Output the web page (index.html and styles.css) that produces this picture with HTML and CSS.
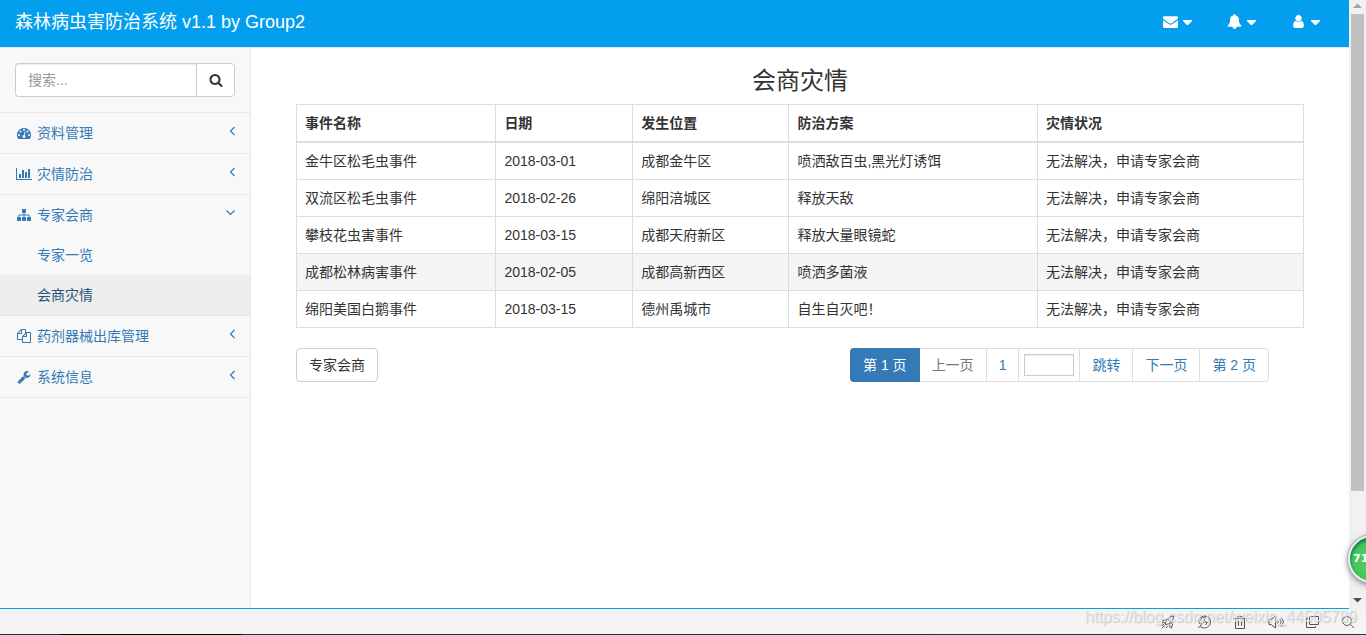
FILE: index.html
```html
<!DOCTYPE html>
<html lang="zh-CN">
<head>
<meta charset="utf-8">
<title>森林病虫害防治系统</title>
<link rel="stylesheet" href="styles.css">
</head>
<body>
<div class="viewport">
  <div class="page">
    <header class="navbar">
      <a class="brand" href="#">森林病虫害防治系统 v1.1 by Group2</a>
      <nav class="top-links">
        <button type="button" class="top-link" aria-label="消息">
          <svg class="icon" viewBox="0 0 1792 1792"><path d="M1792 710v794q0 66-47 113t-113 47h-1472q-66 0-113-47t-47-113v-794q44 49 101 87 362 246 497 345 57 42 92.500 65.500t94.500 48 110 24.500h2q51 0 110-24.500t94.500-48 92.500-65.500q170-123 498-345 57-39 100-87zm0-294q0 79-49 151t-122 123q-376 261-468 325-10 7-42.500 31t-54 38.500-52 32.500-57.500 27-50 9h-2q-23 0-50-9t-57.500-27-52-32.500-54-38.500-42.500-31q-91-64-262-182.500t-205-142.500q-62-42-117-115.500t-55-136.500q0-78 41.500-130t118.500-52h1472q65 0 112.500 47t47.500 113z"/></svg>
          <svg class="caret" viewBox="0 0 9 14"><path d="M0 5h9v1L5 10H4L0 6z"/></svg>
        </button>
        <button type="button" class="top-link" aria-label="通知">
          <svg class="icon" viewBox="0 0 1792 1792"><path d="M912 1696q0-16-16-16-59 0-101.500-42.500t-42.500-101.500q0-16-16-16t-16 16q0 73 51.500 124.500t124.500 51.500q16 0 16-16zm816-288q0 52-38 90t-90 38h-448q0 106-75 181t-181 75-181-75-75-181h-448q-52 0-90-38t-38-90q50-42 91-88t85-119.500 74.500-158.500 50-206 19.500-260q0-152 117-282.500t307-158.500q-8-19-8-39 0-40 28-68t68-28 68 28 28 68q0 20-8 39 190 28 307 158.500t117 282.500q0 139 19.500 260t50 206 74.500 158.500 85 119.500 91 88z"/></svg>
          <svg class="caret" viewBox="0 0 9 14"><path d="M0 5h9v1L5 10H4L0 6z"/></svg>
        </button>
        <button type="button" class="top-link" aria-label="用户">
          <svg class="icon" viewBox="0 0 1792 1792"><path d="M1536 1399q0 109-62.500 187t-150.500 78h-854q-88 0-150.500-78t-62.500-187q0-85 8.500-160.500t31.500-152 58.500-131 94-89 134.500-34.500q131 128 313 128t313-128q76 0 134.500 34.500t94 89 58.500 131 31.500 152 8.500 160.500zm-256-887q0 159-112.500 271.500t-271.500 112.500-271.500-112.500-112.500-271.500 112.500-271.500 271.500-112.500 271.500 112.500 112.500 271.500z"/></svg>
          <svg class="caret" viewBox="0 0 9 14"><path d="M0 5h9v1L5 10H4L0 6z"/></svg>
        </button>
      </nav>
    </header>

    <div class="columns">
      <aside class="sidebar">
        <form class="search">
          <input class="search-input" type="text" placeholder="搜索..." aria-label="搜索">
          <button class="search-button" type="button" aria-label="搜索">
            <svg class="icon" viewBox="0 0 1792 1792"><path d="M1216 832q0-185-131.500-316.500t-316.500-131.500-316.500 131.500-131.500 316.500 131.500 316.500 316.500 131.500 316.500-131.500 131.500-316.500zm512 832q0 52-38 90t-90 38q-54 0-90-38l-343-342q-179 124-399 124-143 0-273.500-55.500t-225-150-150-225-55.500-273.500 55.500-273.500 150-225 225-150 273.500-55.500 273.500 55.500 225 150 150 225 55.500 273.500q0 220-124 399l343 343q37 37 37 90z"/></svg>
          </button>
        </form>
        <ul class="menu">
          <li class="menu-item">
            <a class="menu-link" href="#">
              <svg class="icon" viewBox="0 0 1792 1792"><path d="M384 1152q0-53-37.500-90.500t-90.500-37.500-90.500 37.500-37.500 90.500 37.500 90.500 90.500 37.500 90.500-37.500 37.500-90.500zm192-448q0-53-37.500-90.500t-90.500-37.500-90.500 37.500-37.500 90.500 37.500 90.500 90.500 37.500 90.500-37.500 37.500-90.500zm428 481l101-382q6-26-7.500-48.500t-38.500-29.500-48 6.500-30 39.500l-101 382q-60 5-107 43.500t-63 98.500q-20 77 20 146t117 89 146-20 89-117q16-60-6-117t-72-91zm660-33q0-53-37.500-90.500t-90.500-37.500-90.500 37.500-37.500 90.500 37.500 90.500 90.500 37.500 90.500-37.500 37.500-90.500zm-640-640q0-53-37.500-90.500t-90.500-37.500-90.500 37.500-37.500 90.500 37.500 90.500 90.500 37.500 90.500-37.500 37.500-90.500zm448 192q0-53-37.500-90.500t-90.500-37.500-90.500 37.500-37.500 90.500 37.500 90.500 90.500 37.500 90.500-37.500 37.500-90.500zm320 448q0 261-141 483-19 29-54 29h-1402q-35 0-54-29-141-221-141-483 0-182 71-348t191-286 286-191 348-71 348 71 286 191 191 286 71 348z"/></svg>
              <span class="menu-text">资料管理</span>
              <svg class="arrow" viewBox="0 0 10 16"><path d="M8.500 4L4.500 8l4 4"/></svg>
            </a>
          </li>
          <li class="menu-item">
            <a class="menu-link" href="#">
              <svg class="icon icon-wide" viewBox="0 0 2048 1792"><path d="M640 896v512h-256v-512h256zm384-512v1024h-256v-1024h256zm1024 1152v128h-2048v-1536h128v1408h1920zm-640-896v768h-256v-768h256zm384-384v1152h-256v-1152h256z"/></svg>
              <span class="menu-text">灾情防治</span>
              <svg class="arrow" viewBox="0 0 10 16"><path d="M8.500 4L4.500 8l4 4"/></svg>
            </a>
          </li>
          <li class="menu-item">
            <a class="menu-link" href="#">
              <svg class="icon" viewBox="0 0 1792 1792"><path d="M1792 1248v320q0 40-28 68t-68 28h-320q-40 0-68-28t-28-68v-320q0-40 28-68t68-28h96v-192h-512v192h96q40 0 68 28t28 68v320q0 40-28 68t-68 28h-320q-40 0-68-28t-28-68v-320q0-40 28-68t68-28h96v-192h-512v192h96q40 0 68 28t28 68v320q0 40-28 68t-68 28h-320q-40 0-68-28t-28-68v-320q0-40 28-68t68-28h96v-192q0-52 38-90t90-38h512v-192h-96q-40 0-68-28t-28-68v-320q0-40 28-68t68-28h320q40 0 68 28t28 68v320q0 40-28 68t-68 28h-96v192h512q52 0 90 38t38 90v192h96q40 0 68 28t28 68z"/></svg>
              <span class="menu-text">专家会商</span>
              <svg class="arrow" viewBox="0 0 10 16"><path d="M.5 5.500l4 4 4-4"/></svg>
            </a>
            <ul class="submenu">
              <li><a class="sub-link" href="#">专家一览</a></li>
              <li><a class="sub-link active" href="#">会商灾情</a></li>
            </ul>
          </li>
          <li class="menu-item">
            <a class="menu-link" href="#">
              <svg class="icon" viewBox="0 0 1792 1792"><path d="M1696 384q40 0 68 28t28 68v1216q0 40-28 68t-68 28h-960q-40 0-68-28t-28-68v-288h-544q-40 0-68-28t-28-68v-672q0-40 20-88t48-76l408-408q28-28 76-48t88-20h416q40 0 68 28t28 68v328q68-40 128-40h416zm-544 213l-299 299h299v-299zm-640-384l-299 299h299v-299zm196 647l316-316v-416h-384v416q0 40-28 68t-68 28h-416v640h512v-256q0-40 20-88t48-76zm956 804v-1152h-384v416q0 40-28 68t-68 28h-416v640h896z"/></svg>
              <span class="menu-text">药剂器械出库管理</span>
              <svg class="arrow" viewBox="0 0 10 16"><path d="M8.500 4L4.500 8l4 4"/></svg>
            </a>
          </li>
          <li class="menu-item">
            <a class="menu-link" href="#">
              <svg class="icon" viewBox="0 0 1792 1792"><path d="M448 1472q0-26-19-45t-45-19-45 19-19 45 19 45 45 19 45-19 19-45zm644-420l-682 682q-37 37-90 37-52 0-91-37l-106-108q-38-36-38-90 0-53 38-91l681-681q39 98 114.500 173.500t173.500 114.500zm634-435q0 39-23 106-47 134-164.500 217.500t-258.500 83.500q-185 0-316.500-131.500t-131.500-316.500 131.500-316.500 316.500-131.500q58 0 121.500 16.500t107.500 46.500q16 11 16 28t-16 28l-293 169v224l193 107q5-3 79-48.500t135.500-81 70.500-35.500q15 0 23.500 10t8.500 25z"/></svg>
              <span class="menu-text">系统信息</span>
              <svg class="arrow" viewBox="0 0 10 16"><path d="M8.500 4L4.500 8l4 4"/></svg>
            </a>
          </li>
        </ul>
      </aside>

      <main class="content">
        <h1 class="title">会商灾情</h1>
        <table class="events">
          <colgroup><col class="col-name"><col class="col-date"><col class="col-place"><col class="col-plan"><col></colgroup>
          <thead>
            <tr><th>事件名称</th><th>日期</th><th>发生位置</th><th>防治方案</th><th>灾情状况</th></tr>
          </thead>
          <tbody>
            <tr><td>金牛区松毛虫事件</td><td>2018-03-01</td><td>成都金牛区</td><td>喷洒敌百虫,黑光灯诱饵</td><td>无法解决，申请专家会商</td></tr>
            <tr><td>双流区松毛虫事件</td><td>2018-02-26</td><td>绵阳涪城区</td><td>释放天敌</td><td>无法解决，申请专家会商</td></tr>
            <tr><td>攀枝花虫害事件</td><td>2018-03-15</td><td>成都天府新区</td><td>释放大量眼镜蛇</td><td>无法解决，申请专家会商</td></tr>
            <tr class="hovered"><td>成都松林病害事件</td><td>2018-02-05</td><td>成都高新西区</td><td>喷洒多菌液</td><td>无法解决，申请专家会商</td></tr>
            <tr><td>绵阳美国白鹅事件</td><td>2018-03-15</td><td>德州禹城市</td><td>自生自灭吧！</td><td>无法解决，申请专家会商</td></tr>
          </tbody>
        </table>
        <div class="actions">
          <button type="button" class="button">专家会商</button>
          <ul class="pagination">
            <li><a class="page-link current" href="#">第 1 页</a></li>
            <li><a class="page-link disabled" href="#">上一页</a></li>
            <li><a class="page-link" href="#">1</a></li>
            <li class="page-field"><input class="page-input" type="text" aria-label="页码"></li>
            <li><a class="page-link" href="#">跳转</a></li>
            <li><a class="page-link" href="#">下一页</a></li>
            <li><a class="page-link" href="#">第 2 页</a></li>
          </ul>
        </div>
      </main>
    </div>
  </div>

  <div class="scrollbar">
    <svg class="scroll-arrow" viewBox="0 0 17 14"><path fill="#a3a3a3" d="M4 8h9L8.500 3.500z"/></svg>
    <div class="scroll-thumb"></div>
    <svg class="scroll-arrow scroll-down" viewBox="0 0 17 14"><path fill="#505050" d="M4 5h9L8.500 9.500z"/></svg>
  </div>
</div>

<footer class="statusbar">
  <svg class="tool" viewBox="0 0 14 14"><path d="M4.500 9.500C4 5.500 7.500 1.500 12.500 1c.3 5-3.500 8.500-8 8.500zM5 5L2 5.500l-.5 2 2.500.5M9 9.500L8.500 12l2 1 1-3.500M1 10.500l2-1M1 13l3-2.500M6.500 11L5 13M7 4l5 6"/></svg>
  <svg class="tool" viewBox="0 0 14 14"><path d="M1 12.500C3 12 4 10.500 5 8M3 9C0 4.500 4 1 8 1c3.500 0 5.500 2.500 5.500 5.500 0 4-3 6.500-6 6.500-2 0-3.500-.5-4.500-2M3 5.500C4 3 6 2 9 2M8 3.500L6 7h4.500L8.500 10"/></svg>
  <svg class="tool" viewBox="0 0 14 14"><path d="M.5 3.500h13M4.500 3V1.500h5V3M2.500 3.500v10h9v-10M5.500 6v5M8.500 6v5"/></svg>
  <svg class="tool tool-sound" viewBox="0 0 16 14"><path d="M1 4.500h2l4.500-3.500v12L3 9.500H1zM9.500 5.500c1 1 1 2 0 3M11.500 4c2 2 2 4 0 6M13 2.500c3 3 3 6 0 9"/></svg>
  <svg class="tool" viewBox="0 0 14 14"><path d="M4.500 1.500h9v8h-9zM3 3.500H1.500v9h9V11"/></svg>
  <svg class="tool" viewBox="0 0 14 14"><circle cx="6" cy="6" r="4.500"/><path d="M9.500 9.500L13 13"/></svg>
  <span class="watermark">https://blog.csdn.net/weixin_44505789</span>
</footer>
<div class="ball">71</div>
</body>
</html>
```

FILE: styles.css
```css
* { box-sizing: border-box; }

body {
  margin: 0;
  height: 100vh;
  display: flex;
  flex-direction: column;
  position: relative;
  overflow: hidden;
  background: #fff;
  color: #333;
  font: 14px/20px "Liberation Sans", Arial, "Noto Sans CJK SC", sans-serif;
}

a { color: #337ab7; text-decoration: none; }
ul { list-style: none; margin: 0; padding: 0; }
button, input { font: inherit; color: inherit; }

.viewport { flex: 1; min-height: 0; display: flex; }
.page {
  flex: 1;
  min-width: 0;
  display: flex;
  flex-direction: column;
  border-bottom: 1px solid #02a0e9;
}

.icon { width: 14px; height: 14px; flex: none; fill: currentColor; }
.icon-wide { width: 16px; }

.navbar {
  display: flex;
  justify-content: space-between;
  align-items: center;
  padding: 0 15px;
  background: #039fee;
  border-bottom: 1px solid #e7e7e7;
}
.brand { color: #fff; font-size: 18px; line-height: 20px; padding: 12px 0 15px; }
.top-links { display: flex; }
.top-link {
  display: flex;
  align-items: center;
  gap: 5px;
  padding: 12px 14px 16px 16px;
  border: 0;
  background: none;
  color: #fff;
}
.top-link + .top-link { margin-left: 6px; }
.caret { width: 9px; height: 14px; fill: currentColor; }
.top-link .icon { width: 15px; height: 15px; }
.top-link { padding-left: 15px; }

.columns { flex: 1; display: flex; min-height: 0; }
.sidebar {
  width: 251px;
  flex: none;
  background: #f8f8f8;
  border-right: 1px solid #e7e7e7;
}
.search { display: flex; padding: 15px; border-bottom: 1px solid #e7e7e7; }
.search-input {
  flex: 1;
  min-width: 0;
  height: 34px;
  padding: 6px 12px;
  border: 1px solid #ccc;
  border-right: 0;
  border-radius: 4px 0 0 4px;
  background: #fff;
  box-shadow: inset 0 1px 1px rgba(0, 0, 0, .075);
}
.search-input::placeholder { color: #999; }
.search-button {
  width: 39px;
  display: flex;
  align-items: center;
  justify-content: center;
  padding: 0;
  border: 1px solid #ccc;
  border-radius: 0 4px 4px 0;
  background: #fff;
}

.menu-item { border-bottom: 1px solid #e7e7e7; }
.menu-link { display: flex; align-items: center; padding: 10px 14px 10px 17px; }
.menu-link .icon-wide { margin: 0 -1px; }
.menu-text { flex: 1; padding-left: 6px; }
.arrow {
  width: 10px;
  height: 16px;
  margin-bottom: 4px;
  fill: none;
  stroke: currentColor;
  stroke-width: 1.2;
  overflow: visible;
}
.sub-link { display: block; padding: 10px 15px 10px 37px; }
.sub-link.active { background: #eee; color: #23527c; }

.content { flex: 1; min-width: 0; padding: 20px 45px; }
.title {
  margin: 0 0 10px;
  text-align: center;
  font-size: 24px;
  line-height: 26px;
  font-weight: 400;
}
.events {
  width: 100%;
  table-layout: fixed;
  border-collapse: collapse;
}
.col-name { width: 19.8%; }
.col-date { width: 13.6%; }
.col-place { width: 15.5%; }
.col-plan { width: 24.7%; }
.events th, .events td { padding: 8px; border: 1px solid #ddd; text-align: left; }
.events th { border-bottom-width: 2px; }
.hovered { background: #f5f5f5; }

.actions {
  display: flex;
  justify-content: space-between;
  align-items: flex-start;
  margin-top: 20px;
  padding-right: 35px;
}
.button {
  height: 34px;
  padding: 6px 12px;
  border: 1px solid #ccc;
  border-radius: 4px;
  background: #fff;
}
.pagination {
  display: flex;
  height: 34px;
  border: 1px solid #ddd;
  border-left: 0;
  border-radius: 4px;
}
.pagination li + li { border-left: 1px solid #ddd; }
.pagination li:nth-child(2) { border-left: 0; }
.page-link { display: block; padding: 6px 12px; }
.page-link.current {
  margin: -1px 0;
  padding: 7px 13px;
  background: #337ab7;
  color: #fff;
  border-radius: 4px 0 0 4px;
}
.page-link.disabled { color: #777; }
.page-field { padding: 5px; }
.page-input {
  display: block;
  width: 50px;
  height: 22px;
  padding: 0 4px;
  border: 1px solid #ccc;
  background: #fff;
  box-shadow: inset 0 1px 1px rgba(0, 0, 0, .075);
}

.scrollbar {
  width: 17px;
  flex: none;
  display: flex;
  flex-direction: column;
  background: #f1f1f1;
}
.scroll-arrow { width: 17px; height: 14px; flex: none; }
.scroll-thumb { height: 78.4%; margin: 0 2px; background: #c1c1c1; }
.scroll-down { margin-top: auto; margin-bottom: 2px; }

.statusbar {
  display: flex;
  align-items: center;
  justify-content: flex-end;
  gap: 22px;
  height: 26px;
  position: relative;
  padding-right: 11px;
  background: linear-gradient(90deg, #232c47 0 60px, #050505 60px 242px, #232c47 242px 900px, #1e3950) left bottom / 100% 1px no-repeat, #f4f4f4;
}
.tool {
  width: 14px;
  height: 14px;
  flex: none;
  fill: none;
  stroke: #555;
  stroke-width: 1;
}
.tool-sound { width: 16px; margin: 0 -1px; }
.watermark {
  position: absolute;
  right: 9px;
  bottom: 8px;
  font-size: 16px;
  color: rgba(240, 240, 240, .7);
  text-shadow: 1px 1px 1px rgba(150, 150, 150, .5);
}

.ball {
  position: absolute;
  right: -30px;
  bottom: 52px;
  width: 48px;
  height: 48px;
  padding-left: 3px;
  border: 2px solid #eee;
  border-radius: 50%;
  background: radial-gradient(circle at 50% 55%, #4fd565, #44c45b 58%, #168648 70%);
  box-shadow: 0 0 0 1px #aaa, 0 2px 6px rgba(0, 0, 0, .5);
  color: #fff;
  font: bold 11px/44px "DejaVu Sans", sans-serif;
}
```
